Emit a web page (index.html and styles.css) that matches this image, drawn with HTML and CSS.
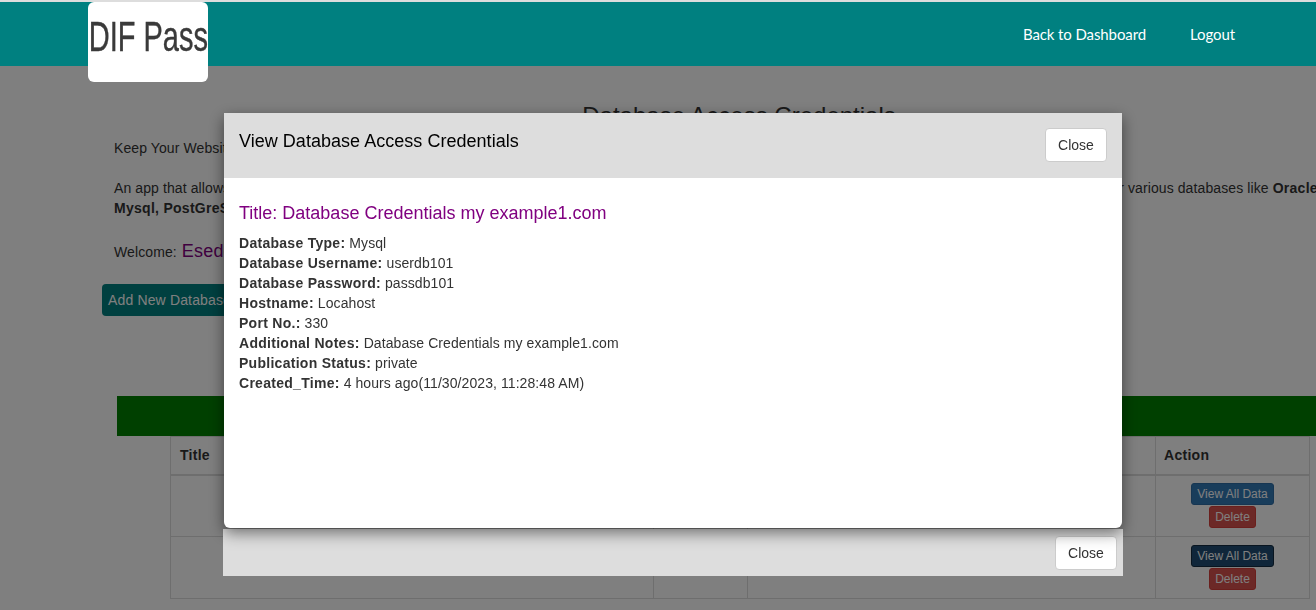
FILE: index.html
```html
<!DOCTYPE html>
<html lang="en">
<head>
<meta charset="utf-8">
<title>DIF Pass</title>
<link rel="stylesheet" href="styles.css">
</head>
<body>
<nav class="navbar">
  <a class="logo"><span class="logo-text">DIF Pass</span></a>
  <div class="nav-links">
    <a>Back to Dashboard</a>
    <a>Logout</a>
  </div>
</nav>
<main class="page">
  <h2 class="page-title">Database Access Credentials</h2>
  <section class="intro">
    <p>Keep Your Website Database Access Credentials Safe and Secure</p>
    <p class="long">An app that allows you to safely store, view, update and manage all of the database access credentials of the websites that you have built and now host, for your various databases like <b>Oracle,</b><br><b>Mysql, PostGreSQL</b> and many more</p>
    <p class="welcome">Welcome: <span>Esedo</span></p>
  </section>
  <button class="add-btn">Add New Database Credentials</button>
  <div class="green-bar"></div>
  <table class="grid">
    <thead>
      <tr><th class="c-title">Title</th><th class="c-type">Type</th><th class="c-notes">Notes</th><th class="c-action">Action</th></tr>
    </thead>
    <tbody>
      <tr><td></td><td></td><td></td><td class="actions"><button class="mini blue">View All Data</button><button class="mini red">Delete</button></td></tr>
      <tr><td></td><td></td><td></td><td class="actions"><button class="mini blue focus">View All Data</button><button class="mini red">Delete</button></td></tr>
    </tbody>
  </table>
</main>
<div class="backdrop"></div>
<div class="modal">
  <div class="modal-content">
    <header class="modal-header">
      <h4>View Database Access Credentials</h4>
      <button class="close-btn">Close</button>
    </header>
    <div class="modal-body">
      <h4>Title: Database Credentials my example1.com</h4>
      <div class="row"><b>Database Type:</b> Mysql</div>
      <div class="row"><b>Database Username:</b> userdb101</div>
      <div class="row"><b>Database Password:</b> passdb101</div>
      <div class="row"><b>Hostname:</b> Locahost</div>
      <div class="row"><b>Port No.:</b> 330</div>
      <div class="row"><b>Additional Notes:</b> Database Credentials my example1.com</div>
      <div class="row"><b>Publication Status:</b> private</div>
      <div class="row"><b>Created_Time:</b> 4 hours ago(11/30/2023, 11:28:48 AM)</div>
    </div>
  </div>
  <footer class="modal-footer">
    <button class="close-btn">Close</button>
  </footer>
</div>
</body>
</html>
```
FILE: styles.css
```css
* { box-sizing: border-box; }
html, body { height: 100%; }
body {
  margin: 0;
  overflow: hidden;
  background: #fff;
  color: #333;
  font: 14px/20px "Liberation Sans", Arial, sans-serif;
  letter-spacing: .08px;
}
b, th { letter-spacing: .28px; }
.navbar {
  position: relative;
  z-index: 3;
  display: flex;
  justify-content: space-between;
  align-items: center;
  height: 66px;
  padding: 0 81px 0 88px;
  background: #008080;
  border-top: 2px solid #ddd;
}
.logo {
  align-self: flex-start;
  display: flex;
  align-items: flex-start;
  justify-content: center;
  width: 120px;
  height: 80px;
  background: #fff;
  border-radius: 6px;
  overflow: hidden;
}
.logo-text {
  display: block;
  font-size: 42px;
  line-height: 70px;
  height: 70px;
  letter-spacing: 0;
  color: #3a3a3a;
  white-space: nowrap;
  transform: scaleX(.69);
  -webkit-text-stroke: .4px #3a3a3a;
}
.nav-links {
  display: flex;
  gap: 44px;
  color: #fff;
  font: 15px/20px Lato, "Noto Sans", sans-serif;
  letter-spacing: -.1px;
}
.page {
  width: 1400px;
  padding-top: 26px;
}
.page-title {
  width: 1316px;
  margin: 0;
  padding-left: 162px;
  text-align: center;
  font-size: 24px;
  line-height: 48px;
  font-weight: 400;
  letter-spacing: 0;
  height: 36px;
}
.intro { margin: 10px 0 0 114px; }
.intro p { margin: 0 0 20px; white-space: nowrap; letter-spacing: .1px; }
.intro .welcome { margin: 23px 0 22px; }
.welcome span { color: #800080; font-size: 18px; margin-left: 1px; letter-spacing: .2px; }
.add-btn {
  display: block;
  margin: 0 0 0 102px;
  width: 240px;
  height: 32px;
  padding: 0 6px;
  border: 0;
  border-radius: 4px;
  background: #008080;
  color: #fff;
  font: inherit;
  letter-spacing: .15px;
  text-align: left;
}
.green-bar {
  width: 1283px;
  height: 40px;
  margin: 80px 0 0 117px;
  background: #008000;
}
.grid {
  margin-left: 170px;
  width: 1140px;
  border-collapse: collapse;
  table-layout: fixed;
}
.grid th, .grid td { border: 1px solid #ddd; padding: 8px; text-align: left; }
.grid th.c-title { padding-left: 9px; }
.grid thead th { border-bottom-width: 2px; height: 38px; }
.grid tbody tr { height: 62px; }
.c-title { width: 483px; }
.c-type { width: 94px; }
.c-action { width: 154px; }
.grid td.actions { text-align: center; padding: 7px 8px 0; vertical-align: top; }
.grid tr + tr td.actions { padding-top: 8px; }
.mini {
  display: block;
  margin: 0 auto 1px;
  height: 22px;
  padding: 1px 5px;
  border: 1px solid;
  border-radius: 3px;
  color: #fff;
  font: 12px/18px "Liberation Sans", Arial, sans-serif;
}
.blue { background: #337ab7; border-color: #2e6da4; }
.blue.focus { background: #204d74; border-color: #122b40; }
.red { background: #d9534f; border-color: #d43f3a; }
.backdrop {
  position: fixed;
  inset: 0;
  z-index: 1;
  background: rgba(0, 0, 0, .5);
}
.modal {
  position: fixed;
  z-index: 2;
  left: 223px;
  top: 113px;
  width: 900px;
}
.modal-content {
  position: relative;
  z-index: 1;
  width: 898px;
  margin-left: 1px;
  border-radius: 0 0 6px 6px;
  background: #fff;
  box-shadow: 0 5px 15px rgba(0, 0, 0, .5);
}
.modal-header {
  display: flex;
  justify-content: space-between;
  align-items: flex-start;
  height: 65px;
  padding: 15px;
  background: #ddd;
}
.modal-header h4 {
  margin: 3px 0 0;
  color: #000;
  font-size: 18px;
  line-height: 20px;
  font-weight: 400;
  letter-spacing: .03px;
}
.modal-body {
  height: 350px;
  padding: 25px 15px 0;
}
.modal-body h4 {
  margin: 0 0 10px;
  color: #800080;
  font-size: 18px;
  line-height: 20px;
  font-weight: 400;
  letter-spacing: 0;
}
.close-btn {
  width: 62px;
  height: 34px;
  padding: 0;
  border: 1px solid #ccc;
  border-radius: 4px;
  background: #fff;
  color: #333;
  font: inherit;
}
.modal-footer {
  display: flex;
  justify-content: flex-end;
  height: 47px;
  margin-top: 1px;
  padding: 7px 6px 0;
  background: #ddd;
}
```
